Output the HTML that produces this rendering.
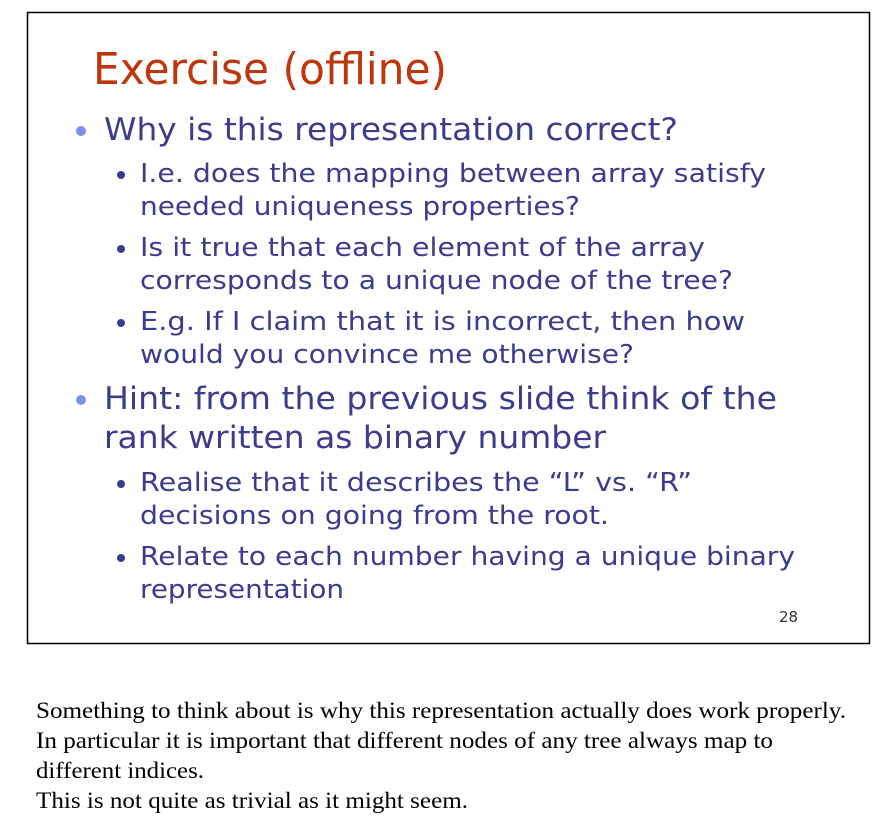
<!DOCTYPE html>
<html><head><meta charset="utf-8"><style>body{margin:0;background:#fff}svg{display:block}</style></head><body>
<svg width="883" height="835" xmlns="http://www.w3.org/2000/svg">
<rect x="27.5" y="12.5" width="842" height="631" fill="#fff" stroke="#000" stroke-width="1.5"/>
<g font-family="DejaVu Sans, Verdana, sans-serif">
<text x="93" y="84" font-size="44" fill="#c0360c" textLength="354" lengthAdjust="spacingAndGlyphs">Exercise (offline)</text>
<g fill="#3c3c8c">
<text x="104" y="140" font-size="31" textLength="574" lengthAdjust="spacingAndGlyphs">Why is this representation correct?</text>
<text x="140" y="182" font-size="26" textLength="626" lengthAdjust="spacingAndGlyphs">I.e. does the mapping between array satisfy</text>
<text x="140" y="215" font-size="26" textLength="440" lengthAdjust="spacingAndGlyphs">needed uniqueness properties?</text>
<text x="140" y="256" font-size="26" textLength="565" lengthAdjust="spacingAndGlyphs">Is it true that each element of the array</text>
<text x="140" y="289" font-size="26" textLength="593" lengthAdjust="spacingAndGlyphs">corresponds to a unique node of the tree?</text>
<text x="140" y="330" font-size="26" textLength="605" lengthAdjust="spacingAndGlyphs">E.g. If I claim that it is incorrect, then how</text>
<text x="140" y="363" font-size="26" textLength="494" lengthAdjust="spacingAndGlyphs">would you convince me otherwise?</text>
<text x="104" y="409" font-size="31" textLength="673" lengthAdjust="spacingAndGlyphs">Hint: from the previous slide think of the</text>
<text x="104" y="448" font-size="31" textLength="502" lengthAdjust="spacingAndGlyphs">rank written as binary number</text>
<text x="140" y="491" font-size="26" textLength="552" lengthAdjust="spacingAndGlyphs">Realise that it describes the “L” vs. “R”</text>
<text x="140" y="524" font-size="26" textLength="469" lengthAdjust="spacingAndGlyphs">decisions on going from the root.</text>
<text x="140" y="565" font-size="26" textLength="655" lengthAdjust="spacingAndGlyphs">Relate to each number having a unique binary</text>
<text x="140" y="598" font-size="26" textLength="204" lengthAdjust="spacingAndGlyphs">representation</text>
</g>
<text x="779" y="622" font-size="15" fill="#333">28</text>
</g>
<g fill="#7f8ff0"><circle cx="81" cy="131" r="5"/><circle cx="81" cy="400" r="5"/></g>
<g fill="#3c3c8c"><circle cx="121" cy="175" r="4"/><circle cx="121" cy="249" r="4"/><circle cx="121" cy="323" r="4"/><circle cx="121" cy="484" r="4"/><circle cx="121" cy="558" r="4"/></g>
<g font-family="Liberation Serif, serif" font-size="23" fill="#000">
<text x="36" y="718" textLength="810" lengthAdjust="spacingAndGlyphs">Something to think about is why this representation actually does work properly.</text>
<text x="36" y="748" textLength="737" lengthAdjust="spacingAndGlyphs">In particular it is important that different nodes of any tree always map to</text>
<text x="36" y="778" textLength="168" lengthAdjust="spacingAndGlyphs">different indices.</text>
<text x="36" y="808" textLength="432" lengthAdjust="spacingAndGlyphs">This is not quite as trivial as it might seem.</text>
</g>
</svg>
</body></html>
